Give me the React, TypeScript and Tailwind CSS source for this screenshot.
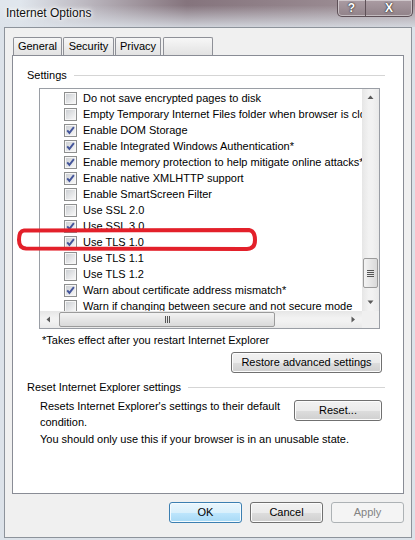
import React from "react";

type Row = { label: string; checked: boolean };
const rows: Row[] = [
  { label: "Do not save encrypted pages to disk", checked: false },
  { label: "Empty Temporary Internet Files folder when browser is closed", checked: false },
  { label: "Enable DOM Storage", checked: true },
  { label: "Enable Integrated Windows Authentication*", checked: true },
  { label: "Enable memory protection to help mitigate online attacks*", checked: true },
  { label: "Enable native XMLHTTP support", checked: true },
  { label: "Enable SmartScreen Filter", checked: false },
  { label: "Use SSL 2.0", checked: false },
  { label: "Use SSL 3.0", checked: true },
  { label: "Use TLS 1.0", checked: true },
  { label: "Use TLS 1.1", checked: false },
  { label: "Use TLS 1.2", checked: false },
  { label: "Warn about certificate address mismatch*", checked: true },
  { label: "Warn if changing between secure and not secure mode", checked: false },
];

function CheckBox({ checked }: { checked: boolean }) {
  return (
    <svg width="13" height="13" viewBox="0 0 13 13" className="shrink-0">
      <defs>
        <linearGradient id="cbg" x1="0" y1="0" x2="1" y2="1">
          <stop offset="0" stopColor="#cdd0d4" />
          <stop offset="1" stopColor="#f7f7f7" />
        </linearGradient>
      </defs>
      <rect x="0.5" y="0.5" width="12" height="12" fill="#f6f6f6" stroke="#8e8f8f" />
      <rect x="2" y="2" width="9" height="9" fill="url(#cbg)" />
      {checked && (
        <path d="M3.2 6.3 L5.4 8.9 L9.9 3.1" fill="none" stroke="#44559a" strokeWidth="1.9" />
      )}
    </svg>
  );
}

function Arrow({ dir }: { dir: "up" | "down" | "left" | "right" }) {
  const d =
    dir === "up"
      ? "M0.5 4 L3.5 0.5 L6.5 4 Z"
      : dir === "down"
      ? "M0.5 0.5 L3.5 4 L6.5 0.5 Z"
      : dir === "left"
      ? "M4 0.5 L0.5 3.5 L4 6.5 Z"
      : "M0.5 0.5 L4 3.5 L0.5 6.5 Z";
  const vertical = dir === "up" || dir === "down";
  return (
    <svg width={vertical ? 7 : 5} height={vertical ? 5 : 7} viewBox={vertical ? "0 0 7 5" : "0 0 5 7"}>
      <path d={d} fill="#5a5a5a" />
    </svg>
  );
}

function Btn({
  children,
  w,
  variant = "normal",
}: {
  children: React.ReactNode;
  w: string;
  variant?: "normal" | "default" | "disabled";
}) {
  const base = "h-[21px] rounded-[3px] border flex items-center justify-center shrink-0 ";
  const cls =
    variant === "default"
      ? "border-[#3c7fb1] bg-[linear-gradient(to_bottom,#eaf6fd_0%,#d9f0fc_50%,#bee6fd_51%,#a7d9f5_100%)] shadow-[inset_0_0_0_1px_#f4fbff] text-black"
      : variant === "disabled"
      ? "border-[#adb2b5] bg-[#f4f4f4] text-[#838383]"
      : "border-[#707070] bg-[linear-gradient(to_bottom,#f2f2f2_0%,#ebebeb_50%,#dddddd_51%,#cfcfcf_100%)] shadow-[inset_0_0_0_1px_#fcfcfc] text-black";
  return <div className={base + cls + " " + w}>{children}</div>;
}

export default function App() {
  return (
    <div className="relative w-[415px] h-[540px] overflow-hidden bg-[#dce2e9] font-['Liberation_Sans',Arial,sans-serif] text-[11px] text-black">
      {/* Title bar (glass) */}
      <div className="relative h-[27px] bg-linear-to-r from-[#e0e6ed] from-5% via-[#85747d] via-45% to-[#a4969c] to-100%">
        <div className="absolute inset-0 bg-linear-to-b from-[#dce2e9]/0 from-20% to-[#dce2e9]/85 to-100%" />
        <div className="relative flex h-full items-start">
          <div className="pl-[6px] pt-[5px] text-[12px] leading-[16px] text-[#111] [text-shadow:0_0_7px_#ffffff,0_0_4px_#ffffff,0_0_2px_#ffffff]">
            Internet Options
          </div>
          <div className="ml-auto mr-[2px] flex h-[17px] rounded-b-[5px] border border-t-0 border-[#5e5057] bg-linear-to-b from-[#ab9ca3] to-[#918289] shadow-[inset_0_0_0_1px_rgba(255,255,255,0.45)] overflow-hidden">
            <div className="w-[28px] flex items-center justify-center border-r border-[#5e5057] text-white font-bold text-[12px] [text-shadow:0_0_2px_#2a2a2a,0_0_1px_#2a2a2a]">
              ?
            </div>
            <div className="w-[46px] flex items-center justify-center text-white font-bold text-[12px] [text-shadow:0_0_2px_#2a2a2a,0_0_1px_#2a2a2a]">
              X
            </div>
          </div>
        </div>
      </div>

      {/* Client area */}
      <div className="ml-[4px] mr-[3px] h-[511px] border border-[#8d939b] bg-[#f0f0f0] flex flex-col">
        {/* Tabs */}
        <div className="mt-[9px] ml-[8px] flex gap-[1px] h-[18px]">
          {["General", "Security", "Privacy", ""].map((t, i) => (
            <div
              key={i}
              className={
                "h-[18px] border border-b-0 border-[#8e9097] rounded-t-[2px] bg-[linear-gradient(to_bottom,#f7f7f7,#e2e2e2)] flex items-center justify-center " +
                (i === 0 ? "w-[49px]" : i === 1 ? "w-[51px]" : i === 2 ? "w-[46px] mr-[1px]" : "w-[50px]")
              }
            >
              {t}
            </div>
          ))}
        </div>

        {/* Panel */}
        <div className="ml-[7px] mr-[7px] h-[439px] border border-[#898c95] bg-white flex flex-col">
          {/* Settings heading */}
          <div className="mt-[12px] pl-[14px] mr-[18px] h-[14px] flex items-center">
            <span>Settings</span>
            <div className="ml-[7px] flex-1 h-px bg-[#d5d5d5]" />
          </div>

          {/* List box */}
          <div className="mt-[6px] ml-[26px] w-[341px] h-[241px] border border-[#9a9ea5] flex flex-col">
            <div className="flex h-[222px]">
              <div className="w-[322px] overflow-hidden pt-[1px]">
                {rows.map((r, i) => (
                  <div key={i} className="h-[16px] flex items-center pl-[24px] gap-[6px] whitespace-nowrap">
                    <CheckBox checked={r.checked} />
                    <span>{r.label}</span>
                  </div>
                ))}
              </div>
              {/* Vertical scrollbar */}
              <div className="w-[17px] flex flex-col bg-[linear-gradient(to_right,#e6e6e6,#f2f2f2_40%,#f2f2f2_60%,#e9e9e9)]">
                <div className="h-[17px] flex items-center justify-center">
                  <Arrow dir="up" />
                </div>
                <div className="h-[152px]" />
                <div className="mx-[1px] h-[30px] rounded-[2px] border border-[#9b9b9b] bg-[linear-gradient(to_right,#f3f3f3,#e6e6e6_50%,#d9d9d9)] flex flex-col items-center justify-center gap-[1px]">
                  <div className="w-[7px] h-px bg-[#555]" />
                  <div className="w-[7px] h-px bg-[#555]" />
                  <div className="w-[7px] h-px bg-[#555]" />
                  <div className="w-[7px] h-px bg-[#555]" />
                </div>
                <div className="flex-1" />
                <div className="h-[17px] flex items-center justify-center">
                  <Arrow dir="down" />
                </div>
              </div>
            </div>
            {/* Horizontal scrollbar */}
            <div className="flex h-[17px]">
              <div className="w-[322px] flex bg-[linear-gradient(to_bottom,#e6e6e6,#f2f2f2_40%,#f2f2f2_60%,#e9e9e9)]">
                <div className="w-[17px] flex items-center justify-center">
                  <Arrow dir="left" />
                </div>
                <div className="ml-[2px] my-[1px] w-[216px] rounded-[2px] border border-[#9b9b9b] bg-[linear-gradient(to_bottom,#f3f3f3,#e6e6e6_50%,#d9d9d9)] flex items-center justify-center gap-[1px]">
                  <div className="h-[7px] w-px bg-[#555]" />
                  <div className="h-[7px] w-px bg-[#555]" />
                  <div className="h-[7px] w-px bg-[#555]" />
                </div>
                <div className="flex-1" />
                <div className="w-[17px] flex items-center justify-center">
                  <Arrow dir="right" />
                </div>
              </div>
              <div className="w-[17px] bg-[#f0f0f0]" />
            </div>
          </div>

          {/* Note */}
          <div className="mt-[5px] pl-[29px] leading-[13px]">*Takes effect after you restart Internet Explorer</div>

          {/* Restore button */}
          <div className="mt-[5px] flex justify-end mr-[21px]">
            <Btn w="w-[151px]">Restore advanced settings</Btn>
          </div>

          {/* Reset heading */}
          <div className="mt-[7px] pl-[14px] mr-[18px] h-[14px] flex items-center">
            <span>Reset Internet Explorer settings</span>
            <div className="ml-[7px] flex-1 h-px bg-[#d5d5d5]" />
          </div>

          {/* Reset block */}
          <div className="mt-[4px] pl-[27px] mr-[21px] flex items-start">
            <div className="flex-1 leading-[16px]">
              Resets Internet Explorer's settings to their default
              <br />
              condition.
            </div>
            <div className="mt-[2px]">
              <Btn w="w-[88px]">Reset...</Btn>
            </div>
          </div>
          <div className="mt-[1px] pl-[27px] leading-[16px]">
            You should only use this if your browser is in an unusable state.
          </div>
        </div>

        {/* Bottom buttons */}
        <div className="mt-[8px] mr-[7px] flex justify-end gap-[8px]">
          <Btn w="w-[73px]" variant="default">OK</Btn>
          <Btn w="w-[73px]">Cancel</Btn>
          <Btn w="w-[73px]" variant="disabled">Apply</Btn>
        </div>
      </div>

      {/* Red annotation loop */}
      <svg className="pointer-events-none absolute left-0 top-0" width="415" height="540" viewBox="0 0 415 540">
        <path
          d="M24 230.5 L249 230 Q255 231 255 240 Q255 249 247 249 L26 248.5 Q19 248 19 240 Q19 231 24 230.5 Z"
          fill="none"
          stroke="#e3202a"
          strokeWidth="4"
        />
      </svg>
    </div>
  );
}
